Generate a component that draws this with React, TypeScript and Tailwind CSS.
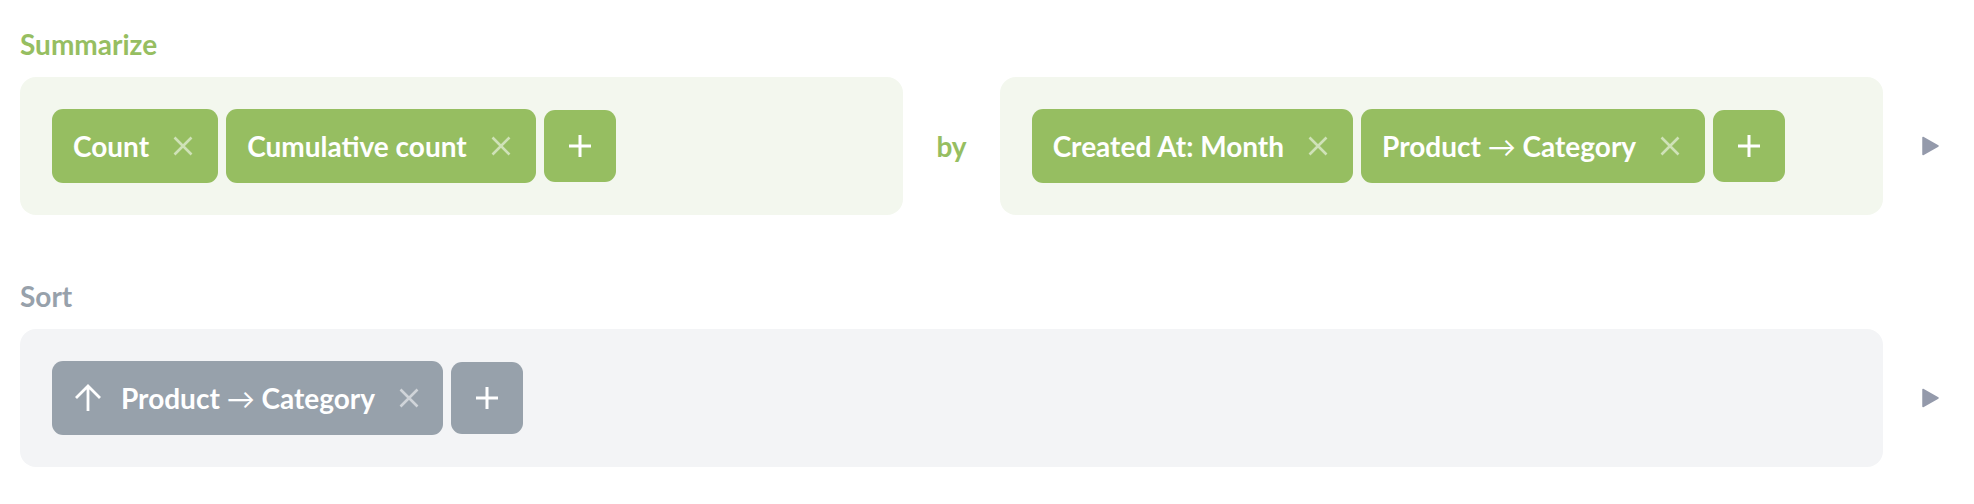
import React from "react";

type Tone = "green" | "gray";

const chipBg: Record<Tone, string> = {
  green: "bg-[#96be61]",
  gray: "bg-[#97a1ab]",
};

const CloseIcon = () => (
  <svg width="20" height="20" viewBox="0 0 20 20" className="ml-[24px] shrink-0">
    <path d="M1.5 1.5 L18.5 18.5 M18.5 1.5 L1.5 18.5" stroke="white" strokeOpacity="0.55" strokeWidth="2.6" />
  </svg>
);

const PlusIcon = () => (
  <svg width="24" height="24" viewBox="0 0 24 24">
    <path d="M12 1 V23 M1 12 H23" stroke="white" strokeWidth="3" />
  </svg>
);

const UpArrow = () => (
  <svg width="28" height="28" viewBox="0 0 28 28" className="mr-[19px] shrink-0">
    <path d="M14 27 V2.5 M2 14 L14 2 L26 14" stroke="white" strokeWidth="2.8" fill="none" />
  </svg>
);

const Chip: React.FC<{ label: string; tone: Tone; sortUp?: boolean }> = ({ label, tone, sortUp }) => {
  const parts = label.split("→");
  return (
    <div
      className={`flex h-[74px] items-center rounded-[11px] text-white ${chipBg[tone]} ${
        sortUp ? "pl-[22px] pr-[24px]" : "pl-[21px] pr-[25px]"
      }`}
    >
      {sortUp && <UpArrow />}
      <span className="whitespace-nowrap">
        {parts.length > 1 ? (
          <>
            {parts[0]}
            <span className="font-normal">→</span>
            {parts[1]}
          </>
        ) : (
          label
        )}
      </span>
      <CloseIcon />
    </div>
  );
};

const AddButton: React.FC<{ tone: Tone }> = ({ tone }) => (
  <div className={`flex h-[72px] w-[72px] items-center justify-center rounded-[11px] ${chipBg[tone]}`}>
    <PlusIcon />
  </div>
);

const Triangle = () => (
  <div className="flex w-[91px] shrink-0 items-center pl-[39px]">
    <svg width="17" height="20" viewBox="0 0 17 20">
      <path d="M1 1.5 L16 10 L1 18.5 Z" fill="#949aab" stroke="#949aab" strokeWidth="1.5" strokeLinejoin="round" />
    </svg>
  </div>
);

const App: React.FC = () => {
  return (
    <div className="bg-white pb-[37px] pl-[20px] pt-[27px] font-[Lato,sans-serif] text-[28px] font-bold leading-[34px]">
      <div className="mb-4 text-[#96be61]">Summarize</div>
      <div className="flex">
        <div className="flex flex-1 items-center">
          <div className="flex flex-1 items-center gap-2 rounded-2xl bg-[#f3f7ee] p-[32px]">
            <Chip label="Count" tone="green" />
            <Chip label="Cumulative count" tone="green" />
            <AddButton tone="green" />
          </div>
          <div className="px-[33px] text-[#96be61]">by</div>
          <div className="flex flex-1 items-center gap-2 rounded-2xl bg-[#f3f7ee] p-[32px]">
            <Chip label="Created At: Month" tone="green" />
            <Chip label="Product → Category" tone="green" />
            <AddButton tone="green" />
          </div>
        </div>
        <Triangle />
      </div>

      <div className="mb-4 mt-16 text-[#97a1ab]">Sort</div>
      <div className="flex">
        <div className="flex flex-1 items-center gap-2 rounded-2xl bg-[#f3f4f6] p-[32px]">
          <Chip label="Product → Category" tone="gray" sortUp />
          <AddButton tone="gray" />
        </div>
        <Triangle />
      </div>
    </div>
  );
};

export default App;
